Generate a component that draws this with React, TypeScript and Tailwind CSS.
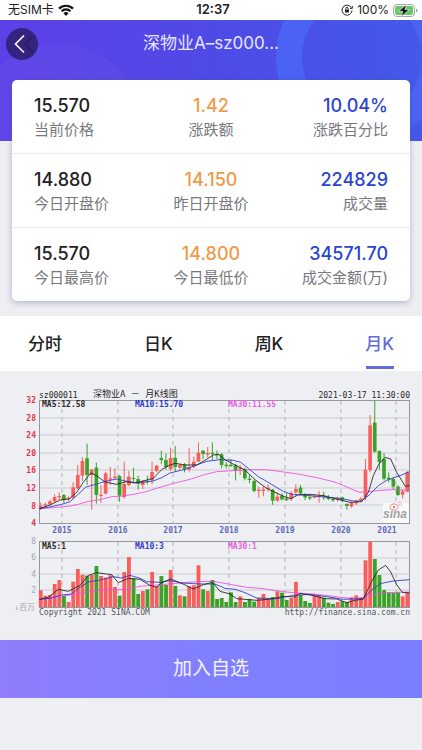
const SANS = "font-[Inter,'Noto_Sans_CJK_SC',sans-serif]";

type Stat = { value: string; label: string };

const STATS: [Stat, Stat, Stat][] = [
  [
    { value: '15.570', label: '当前价格' },
    { value: '1.42', label: '涨跌额' },
    { value: '10.04%', label: '涨跌百分比' },
  ],
  [
    { value: '14.880', label: '今日开盘价' },
    { value: '14.150', label: '昨日开盘价' },
    { value: '224829', label: '成交量' },
  ],
  [
    { value: '15.570', label: '今日最高价' },
    { value: '14.800', label: '今日最低价' },
    { value: '34571.70', label: '成交金额(万)' },
  ],
];

const COLUMN_STYLES = [
  { cell: 'text-left', value: 'text-[#222222]' },
  { cell: 'text-center', value: 'text-[#ee9b48]' },
  { cell: 'text-right', value: 'text-[#2b44cf]' },
];

const TABS = ['分时', '日K', '周K', '月K'];

// Monthly candles: direction, body top, body bottom, wick top, wick bottom, volume top.
// The drawing units are a third of a chart unit.
type Candle = ['r' | 'g', number, number, number, number, number];

const CANDLES: Candle[] = [
  ['r', 362, 372, 353, 375, 211],
  ['r', 358, 362, 352, 366, 227],
  ['r', 349, 358, 344, 362, 225],
  ['r', 336, 349, 328, 352, 192],
  ['r', 333, 337, 322, 345, 180],
  ['g', 330, 344, 327, 354, 228],
  ['r', 338, 342, 334, 348, 246],
  ['r', 307, 338, 292, 342, 185],
  ['r', 270, 310, 240, 313, 147],
  ['r', 228, 272, 216, 288, 164],
  ['g', 220, 270, 176, 300, 167],
  ['r', 254, 270, 252, 374, 165],
  ['g', 248, 330, 233, 356, 138],
  ['r', 329, 333, 300, 354, 168],
  ['r', 265, 326, 260, 328, 173],
  ['r', 280, 284, 246, 300, 166],
  ['r', 275, 279, 250, 285, 201],
  ['g', 273, 332, 270, 350, 227],
  ['r', 297, 336, 230, 342, 156],
  ['r', 275, 300, 258, 304, 111],
  ['g', 279, 282, 248, 290, 175],
  ['g', 282, 296, 272, 314, 222],
  ['r', 288, 300, 285, 312, 213],
  ['g', 287, 291, 272, 298, 208],
  ['r', 261, 286, 230, 298, 156],
  ['r', 242, 258, 240, 262, 199],
  ['g', 219, 225, 197, 238, 168],
  ['g', 225, 246, 206, 254, 195],
  ['r', 219, 252, 188, 258, 150],
  ['g', 219, 246, 183, 260, 198],
  ['r', 240, 248, 235, 254, 226],
  ['g', 238, 252, 234, 262, 229],
  ['r', 246, 254, 190, 260, 199],
  ['r', 230, 245, 215, 250, 196],
  ['r', 203, 230, 172, 230, 136],
  ['g', 197, 207, 196, 222, 208],
  ['r', 204, 209, 186, 217, 213],
  ['g', 203, 207, 172, 225, 180],
  ['g', 207, 211, 196, 222, 237],
  ['g', 208, 240, 204, 250, 234],
  ['g', 239, 243, 232, 250, 246],
  ['g', 239, 243, 222, 246, 217],
  ['g', 241, 257, 236, 286, 246],
  ['r', 248, 253, 240, 270, 229],
  ['g', 252, 280, 248, 286, 246],
  ['g', 281, 285, 270, 295, 237],
  ['g', 288, 318, 284, 322, 245],
  ['r', 314, 318, 305, 338, 234],
  ['r', 313, 318, 304, 334, 222],
  ['r', 308, 312, 298, 320, 236],
  ['g', 314, 347, 312, 360, 231],
  ['r', 335, 347, 322, 350, 214],
  ['g', 332, 343, 325, 346, 218],
  ['g', 341, 345, 325, 348, 240],
  ['r', 325, 342, 318, 348, 234],
  ['r', 312, 322, 298, 330, 186],
  ['g', 308, 325, 300, 330, 225],
  ['g', 330, 337, 325, 345, 243],
  ['g', 336, 340, 330, 345, 249],
  ['r', 334, 338, 330, 340, 225],
  ['r', 332, 336, 318, 353, 228],
  ['g', 331, 335, 320, 345, 233],
  ['g', 338, 342, 330, 346, 248],
  ['g', 342, 346, 338, 350, 252],
  ['r', 341, 345, 335, 350, 246],
  ['g', 337, 346, 335, 352, 244],
  ['g', 357, 363, 355, 374, 246],
  ['r', 354, 364, 350, 368, 232],
  ['r', 349, 355, 344, 360, 226],
  ['r', 341, 346, 336, 350, 233],
  ['r', 254, 336, 222, 345, 121],
  ['r', 121, 255, 90, 262, 65],
  ['g', 113, 200, 46, 203, 117],
  ['g', 198, 231, 196, 254, 165],
  ['g', 222, 281, 204, 286, 210],
  ['g', 278, 283, 262, 292, 218],
  ['g', 282, 305, 276, 314, 219],
  ['g', 305, 330, 300, 333, 217],
  ['r', 319, 329, 312, 340, 229],
  ['r', 262, 320, 258, 322, 218],
];

const YEARS = [
  { x: 62, label: '2015' },
  { x: 118, label: '2016' },
  { x: 173, label: '2017' },
  { x: 229, label: '2018' },
  { x: 285, label: '2019' },
  { x: 341, label: '2020' },
  { x: 396, label: '2021' },
];

const candleX = (i: number) => 122 + i * 13.92;
const fillOf = (c: Candle) => (c[0] === 'r' ? '#f85f5c' : '#3aa327');

const PRICE_LINES = [
  {
    color: '#ee4fe0',
    points:
      '118,371 160,368 205,364 235,358 265,349 300,344 335,335 370,333 400,328 435,321 470,310 520,295 570,283 610,270 650,260 700,257 760,254 800,254 851,261 900,268 950,278 1000,290 1030,301 1060,315 1080,322 1105,320 1140,316 1180,314 1225,316',
  },
  {
    color: '#3038d0',
    points:
      '118,371 150,366 185,358 210,350 232,330 258,306 290,297 320,288 350,282 375,288 415,294 460,288 485,278 510,264 555,253 590,240 620,229 660,224 700,226 722,232 745,250 775,275 810,295 851,320 880,329 920,331 970,336 1020,340 1060,348 1085,348 1110,328 1135,302 1160,286 1185,277 1205,270 1229,260',
  },
  {
    color: '#242424',
    points:
      '118,371 150,360 180,345 208,342 230,322 250,292 272,264 290,272 315,291 350,298 378,290 405,294 425,289 460,280 485,254 505,242 525,235 555,240 590,240 615,226 640,210 656,208 675,224 705,240 735,255 765,284 800,310 851,334 872,341 895,329 930,328 970,332 1010,342 1050,352 1085,350 1105,322 1120,272 1136,238 1155,217 1172,222 1190,262 1205,286 1216,304 1229,302',
  },
];

const VOLUME_LINES = [
  {
    color: '#ee4fe0',
    points:
      '118,238 160,232 210,225 270,214 320,209 380,208 420,199 470,195 530,190 590,185 640,184 690,193 740,202 790,206 840,214 880,218 950,223 1000,229 1050,235 1080,234 1120,224 1160,218 1229,216',
  },
  {
    color: '#3038d0',
    points:
      '118,238 150,235 185,225 215,222 235,205 265,186 300,180 340,170 365,174 390,166 420,175 440,185 480,187 510,182 545,189 600,192 645,192 675,205 705,208 735,218 770,234 830,236 880,226 930,223 980,230 1030,238 1090,236 1110,215 1140,191 1180,183 1229,179',
  },
  {
    color: '#242424',
    points:
      '118,238 145,232 175,208 205,214 240,196 265,166 290,158 335,164 355,188 385,175 420,178 450,196 470,202 485,188 512,177 545,190 580,207 610,194 638,187 660,214 690,222 710,236 770,241 815,237 850,229 885,231 900,220 940,227 975,236 1010,237 1040,248 1065,241 1090,237 1115,184 1135,150 1157,136 1172,156 1190,194 1207,217 1229,219',
  },
];

function StockChart() {
  return (
    <svg
      viewBox="0 0 422 269"
      className="block w-full font-['DejaVu_Sans_Mono','Noto_Sans_CJK_SC',monospace] text-[8px]"
      role="img"
      aria-label="深物业A 月K线图"
    >
      <g fill="#2a2a2a">
        <text x="39" y="27">sz000011</text>
        <text x="93" y="26" className="text-[9px]">深物业A － 月K线图</text>
        <text x="410" y="27" textAnchor="end">2021-03-17 11:30:00</text>
      </g>

      <g stroke="#cbcdd3" strokeWidth="1">
        {[47, 64, 82, 99, 117, 134].map((y) => (
          <line key={y} x1="39" x2="410" y1={y} y2={y} />
        ))}
        {[187, 203, 219].map((y) => (
          <line key={y} x1="39" x2="410" y1={y} y2={y} />
        ))}
      </g>
      <g stroke="#b2b3bb" strokeWidth="1" strokeDasharray="4 4">
        {YEARS.map(({ x, label }) => (
          <path key={label} d={`M${x} 30V152M${x} 171V236`} />
        ))}
      </g>
      <g fill="none" stroke="#96979c" strokeWidth="1">
        <rect x="39.5" y="29.5" width="370" height="123" />
        <rect x="39.5" y="170.5" width="370" height="66" />
      </g>

      <g fill="#e3344a" textAnchor="end" className="font-bold">
        {[32, 28, 24, 20, 16, 12, 8, 4].map((n, i) => (
          <text key={n} x="36" y={32 + i * 17.6}>{n}</text>
        ))}
      </g>
      <g fill="#a6a7ae" textAnchor="end">
        {[8, 6, 4, 2].map((n, i) => (
          <text key={n} x="36" y={173 + i * 16.3}>{n}</text>
        ))}
        <text x="35" y="239">↓百万</text>
      </g>
      <g fill="#5f68bd" textAnchor="middle" className="font-bold">
        {YEARS.map(({ x, label }) => (
          <text key={label} x={label === '2021' ? 387 : x} y="162">{label}</text>
        ))}
      </g>

      <g>
        <rect x="383" y="132" width="26" height="20" fill="#fafafa" />
        <text x="383" y="147" fill="#a3a3a5" className="font-['Liberation_Sans',sans-serif] text-[12px] font-bold italic">
          sina
        </text>
        <ellipse cx="394" cy="136" rx="4" ry="3" fill="none" stroke="#eda9a6" strokeWidth="1.3" />
        <circle cx="394" cy="136" r="1.2" fill="#d98580" />
        <path d="M398 133q2 0 2 2M398 131q4 0 4 4" fill="none" stroke="#eda9a6" strokeWidth="0.8" />
      </g>

      <g transform="translate(0 14) scale(.33333)">
        {CANDLES.map((c, i) => (
          <g key={i} fill={fillOf(c)}>
            <rect x={candleX(i) - 1.5} y={c[3]} width="3" height={c[4] - c[3]} />
            <rect x={candleX(i) - 5.5} y={c[1]} width="11" height={c[2] - c[1]} />
          </g>
        ))}
        {PRICE_LINES.map((l) => (
          <polyline key={l.color} points={l.points} fill="none" stroke={l.color} strokeWidth="2.6" strokeLinejoin="round" />
        ))}
      </g>
      <g transform="translate(0 149) scale(.33333)">
        {CANDLES.map((c, i) => (
          <rect key={i} x={candleX(i) - 5.5} y={c[5]} width="11.5" height={261 - c[5]} fill={fillOf(c)} />
        ))}
        {VOLUME_LINES.map((l) => (
          <polyline key={l.color} points={l.points} fill="none" stroke={l.color} strokeWidth="2.6" strokeLinejoin="round" />
        ))}
      </g>

      <g className="font-bold">
        <g fill="#2a2a2a">
          <text x="42" y="36">MA5:12.58</text>
          <text x="42" y="178">MA5:1</text>
        </g>
        <g fill="#3038d0">
          <text x="135" y="36">MA10:15.70</text>
          <text x="135" y="178">MA10:3</text>
        </g>
        <g fill="#e65ee0">
          <text x="228" y="36">MA30:11.55</text>
          <text x="228" y="178">MA30:1</text>
        </g>
      </g>
      <g fill="#55565b">
        <text x="39" y="244">Copyright 2021 SINA.COM</text>
        <text x="410" y="244" textAnchor="end">http://finance.sina.com.cn</text>
      </g>
    </svg>
  );
}

function StatusBar() {
  return (
    <div className="grid h-5 grid-cols-3 items-center bg-white pr-1 pl-2 text-xs text-[#222222]">
      <div className="flex items-center gap-1">
        <span>无SIM卡</span>
        <svg viewBox="0 0 16 12" className="h-3 w-4" fill="none" stroke="#111111" strokeWidth="2.2">
          <path d="M1 4.6a10 10 0 0 1 14 0M3.6 7.3a6.2 6.2 0 0 1 8.8 0" />
          <path d="M8 12 5.4 9.3a3.7 3.7 0 0 1 5.2 0z" fill="#111111" stroke="none" />
        </svg>
      </div>
      <span className="text-center text-[13px] font-semibold">12:37</span>
      <div className="flex items-center justify-end gap-1">
        <svg viewBox="0 0 12 12" className="h-3 w-3" fill="none" stroke="#222222">
          <path d="M10.3 3.6A5 5 0 1 0 11 6.500M11.300 2v2.400H9" />
          <path d="M4.800 5.500V4.600a1.200 1.200 0 0 1 2.400 0v.9" />
          <rect x="4" y="5.5" width="4" height="3" fill="#222222" stroke="none" />
        </svg>
        <span>100%</span>
        <svg viewBox="0 0 25 13" className="h-[13px] w-[25px]">
          <rect x="0.5" y="0.5" width="21" height="12" rx="3.5" fill="#ffffff" stroke="#a5a8a5" />
          <rect x="2" y="2" width="18" height="9" rx="2" fill="#67c967" />
          <path d="M23 4.500q1.600.4 1.600 2t-1.600 2z" fill="#a5a8a5" />
          <path d="M13.500.5 5.500 7.300h4.300L8.300 12.500l8-6.900h-4.400z" fill="#111111" stroke="#ffffff" strokeWidth="0.6" />
        </svg>
      </div>
    </div>
  );
}

export default function App() {
  return (
    <div className={`min-h-screen bg-[#eeeff2] ${SANS}`}>
      <StatusBar />

      <header className="relative h-[121px] overflow-hidden bg-linear-to-r from-[#5c40e8] via-[#4f4ae6] to-[#4259ea]">
        <svg viewBox="0 0 422 121" preserveAspectRatio="xMaxYMin slice" className="absolute inset-0 h-full w-full" aria-hidden="true">
          <circle cx="58" cy="112" r="88" fill="#ffffff" fillOpacity="0.03" />
          <circle cx="362" cy="37" r="73" fill="none" stroke="#4a63f4" strokeWidth="26" />
        </svg>
        <div className="relative grid h-12 grid-cols-[40px_1fr_40px] items-center">
          <button type="button" aria-label="返回" className="ml-[6px] flex size-8 items-center justify-center rounded-full bg-[#35247f]">
            <svg viewBox="0 0 32 32" className="size-8" fill="none">
              <path d="M26 9 19 16l8 8" stroke="#2b1e60" strokeWidth="2" />
              <path d="m18 7.500-8.500 8.500L18 24.500" stroke="#ffffff" strokeWidth="1.6" />
            </svg>
          </button>
          <h1 className="text-center text-[17px] text-[#e6e6ff]">深物业A–sz000...</h1>
        </div>
      </header>

      <dl className="relative mx-3 -mt-[61px] rounded-[5px] bg-white shadow-[0_2px_6px_rgba(70,75,150,0.35)]">
        {STATS.map((row, r) => (
          <div key={r} className="grid grid-cols-3 border-b border-[#ececf0] px-[22px] pt-[13px] pb-[11px] last:border-b-0">
            {row.map((stat, c) => (
              <div key={stat.label} className={`flex flex-col-reverse ${COLUMN_STYLES[c].cell}`}>
                <dt className="text-[15px] leading-6 whitespace-nowrap text-[#77787d]">{stat.label}</dt>
                <dd className={`text-lg leading-[25px] font-medium ${COLUMN_STYLES[c].value}`}>{stat.value}</dd>
              </div>
            ))}
          </div>
        ))}
      </dl>

      <nav className="mt-[15px] flex h-[55px] justify-between bg-white px-7">
        {TABS.map((tab) => (
          <button
            key={tab}
            type="button"
            className={
              tab === '月K'
                ? 'flex flex-col items-center justify-between pb-[2px] text-[17px] font-medium text-[#646bdc]'
                : 'flex flex-col items-center justify-between pb-[2px] text-[17px] font-medium text-[#222222]'
            }
          >
            <span className="pt-4 leading-6">{tab}</span>
            {tab === '月K' && <span className="h-[3px] w-7 bg-[#646bdc]" />}
          </button>
        ))}
      </nav>

      <StockChart />

      <button
        type="button"
        className="block h-[58px] w-full bg-linear-to-r from-[#8f7dfb] via-[#8080ff] to-[#7a7dfe] text-[19px] text-[#f3f3ff]"
      >
        加入自选
      </button>
    </div>
  );
}
